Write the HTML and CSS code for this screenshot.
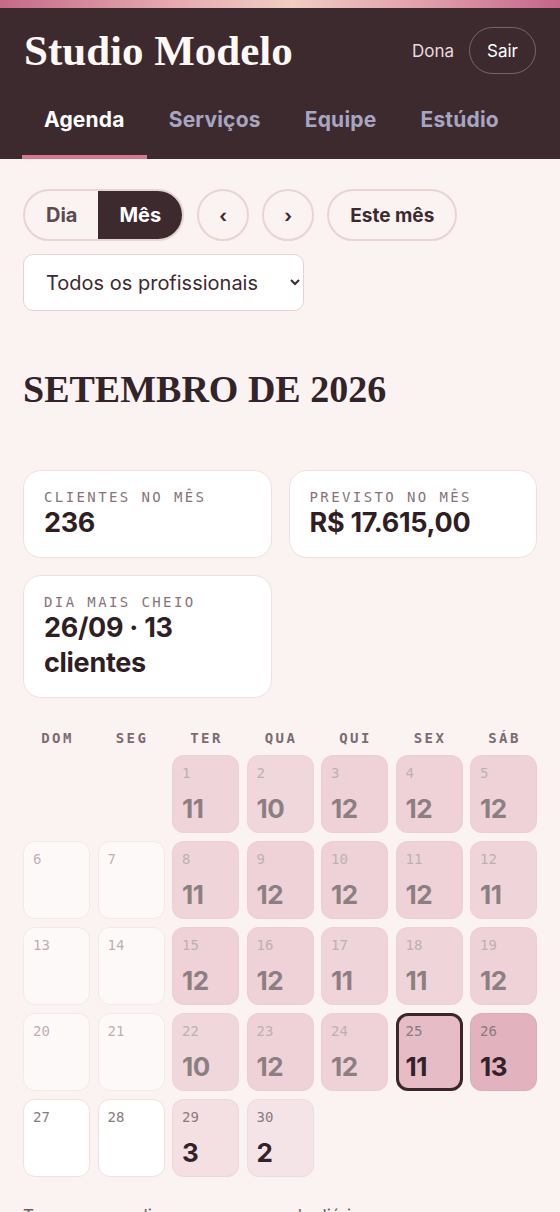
FILE: index.html
```html
<!DOCTYPE html>
<html lang="pt-BR">
<head>
  <meta charset="UTF-8">
  <meta name="viewport" content="width=device-width, initial-scale=1.0">
  <title>Studio Modelo - Agenda</title>
  <link rel="stylesheet" href="styles.css">
</head>
<body>
  <div class="topbar"></div>
  <header class="header">
    <div class="header-top">
      <h1 class="brand">Studio Modelo</h1>
      <div class="user">
        <span class="user-name">Dona</span>
        <button class="logout">Sair</button>
      </div>
    </div>
    <nav class="tabs">
      <a class="tab active" href="#">Agenda</a>
      <a class="tab" href="#">Serviços</a>
      <a class="tab" href="#">Equipe</a>
      <a class="tab" href="#">Estúdio</a>
    </nav>
  </header>

  <main class="main">
    <!-- View controls -->
    <div class="toolbar">
      <div class="segmented">
        <button class="seg">Dia</button>
        <button class="seg active">Mês</button>
      </div>
      <button class="round-btn">‹</button>
      <button class="round-btn">›</button>
      <button class="pill-btn">Este mês</button>
    </div>
    <div class="filter">
      <select class="pro-select">
        <option>Todos os profissionais</option>
        <option>Ana</option>
        <option>Bruna</option>
      </select>
    </div>

    <h2 class="month-title">SETEMBRO DE 2026</h2>

    <!-- Month stats -->
    <div class="stats">
      <div class="stat-card">
        <div class="stat-label">CLIENTES NO MÊS</div>
        <div class="stat-value">236</div>
      </div>
      <div class="stat-card">
        <div class="stat-label">PREVISTO NO MÊS</div>
        <div class="stat-value">R$ 17.615,00</div>
      </div>
      <div class="stat-card">
        <div class="stat-label">DIA MAIS CHEIO</div>
        <div class="stat-value">26/09 · 13 clientes</div>
      </div>
    </div>

    <!-- Calendar -->
    <div class="weekdays">
      <span>DOM</span><span>SEG</span><span>TER</span><span>QUA</span><span>QUI</span><span>SEX</span><span>SÁB</span>
    </div>
    <div class="month-grid" id="month-grid"></div>

    <p class="hint">Toque em um dia para ver a agenda diária.</p>
  </main>

  <script>
    // clients per day (0 = closed)
    const counts = [11, 10, 12, 12, 12, 0, 0, 11, 12, 12, 12, 11, 0, 0, 12, 12, 11, 11, 12, 0, 0,
                    10, 12, 12, 11, 13, 0, 0, 3, 2];
    const today = 25;
    const firstWeekday = 2; // 1/9/2026 is a tuesday
    const max = Math.max(...counts);
    const grid = document.getElementById('month-grid');

    counts.forEach((count, i) => {
      const day = i + 1;
      const cell = document.createElement('div');
      cell.className = 'day';
      if (day === 1) cell.style.gridColumnStart = firstWeekday + 1;
      if (day < today) cell.classList.add('past');
      if (day === today) cell.classList.add('today');

      const num = document.createElement('span');
      num.className = 'day-num';
      num.textContent = day;
      cell.appendChild(num);

      if (count > 0) {
        cell.classList.add('busy');
        cell.style.setProperty('--heat', (0.15 + 0.85 * count / max).toFixed(2));
        const total = document.createElement('span');
        total.className = 'day-count';
        total.textContent = count;
        cell.appendChild(total);
      }
      grid.appendChild(cell);
    });
  </script>
</body>
</html>
```

FILE: styles.css
```css
body {
  margin: 0;
  background: #fbf3f1;
  font-family: Inter, "Noto Sans", sans-serif;
  color: #33232a;
}
button {
  font-family: inherit;
  cursor: pointer;
}
.topbar {
  height: 8px;
  background: linear-gradient(90deg, #c46a88, #e6a8b0 30%, #f1cdc2 52%, #e2a0ad 75%, #c4668a);
}
.header {
  background: #3d2a2f;
  padding: 0 24px;
}
.header-top {
  display: flex;
  align-items: center;
  justify-content: space-between;
  padding-top: 19px;
}
.brand {
  margin: 0;
  font-family: "Liberation Serif", serif;
  font-weight: 700;
  font-size: 43px;
  line-height: 47px;
  color: #fff8f5;
}
.user {
  display: flex;
  align-items: center;
  gap: 15px;
}
.user-name {
  color: #e9dadd;
  font-size: 17px;
}
.logout {
  height: 47px;
  padding: 0 17px;
  border: 1.5px solid rgba(255, 255, 255, 0.28);
  border-radius: 24px;
  background: transparent;
  color: #fff;
  font-size: 17px;
}
.tabs {
  display: flex;
  margin: 7px 0 0 -2px;
}
.tab {
  padding: 27px 22px 23px;
  line-height: 24px;
  font-size: 21px;
  font-weight: 700;
  letter-spacing: 0.2px;
  color: #a7a6c1;
  text-decoration: none;
  border-bottom: 4px solid transparent;
}
.tab.active {
  color: #fff;
  border-bottom-color: #d8768f;
}

.main {
  padding: 30px 23px 0;
}
.toolbar {
  display: flex;
  align-items: center;
  gap: 13px;
}
.segmented {
  display: flex;
  border: 2px solid #e8d5d2;
  border-radius: 26px;
  overflow: hidden;
}
.seg {
  height: 48px;
  padding: 0 21px;
  border: none;
  background: transparent;
  font-size: 20px;
  font-weight: 700;
  color: #5b4a50;
}
.seg.active {
  background: #3d2a2f;
  color: #fff;
}
.round-btn {
  width: 52px;
  height: 52px;
  border: 2px solid #e8d5d2;
  border-radius: 50%;
  background: transparent;
  font-size: 18px;
  font-weight: 700;
  color: #3d2a2f;
}
.pill-btn {
  height: 52px;
  padding: 0 21px;
  border: 2px solid #e8d5d2;
  border-radius: 26px;
  background: transparent;
  font-size: 19px;
  font-weight: 700;
  color: #3d2a2f;
}
.filter {
  margin-top: 13px;
}
.pro-select {
  width: 281px;
  height: 57px;
  padding: 0 10px 0 18px;
  border: 1px solid #e6d3d0;
  border-radius: 10px;
  background: #fff;
  font-family: inherit;
  font-size: 20px;
  color: #3d2a2f;
}

.month-title {
  margin: 55px 0 0;
  font-family: "Liberation Serif", serif;
  font-weight: 700;
  font-size: 38px;
  line-height: 46px;
  color: #33232a;
}

.stats {
  display: grid;
  grid-template-columns: 1fr 1fr;
  gap: 17px;
  margin-top: 58px;
}
.stat-card {
  padding: 18px 20px 17px;
  border: 1px solid #efe0de;
  border-radius: 18px;
  background: #fff;
}
.stat-label {
  font-family: "DejaVu Sans Mono", monospace;
  font-size: 14px;
  line-height: 16px;
  letter-spacing: 2.4px;
  color: #877479;
}
.stat-value {
  font-size: 27px;
  font-weight: 700;
  line-height: 35px;
  letter-spacing: -0.3px;
  color: #2f1f25;
}

.weekdays {
  display: grid;
  grid-template-columns: repeat(7, 1fr);
  gap: 7.5px;
  margin-top: 30px;
  text-align: center;
  font-family: "DejaVu Sans Mono", monospace;
  font-weight: 700;
  font-size: 14px;
  line-height: 20px;
  letter-spacing: 2.4px;
  color: #7c6b71;
}
.weekdays span {
  padding-left: 2px;
}
.month-grid {
  display: grid;
  grid-template-columns: repeat(7, 1fr);
  grid-auto-rows: 78px;
  gap: 8px 7.5px;
  margin-top: 7px;
}
.day {
  display: flex;
  flex-direction: column;
  justify-content: space-between;
  padding: 9px 9px 8px;
  border: 1px solid #efe1df;
  border-radius: 12px;
  background: #fff;
  box-sizing: border-box;
}
.day.busy {
  border-color: rgba(120, 60, 80, 0.05);
  background: color-mix(in srgb, #e2b3bf calc(var(--heat) * 100%), #fdf7f7);
}
.day.past {
  opacity: 0.55;
}
.day.today {
  border: 3px solid #3a262c;
  padding: 7px 7px 6px;
}
.day-num {
  font-family: "DejaVu Sans Mono", monospace;
  font-size: 14px;
  line-height: 16px;
  color: #8a7a7f;
}
.day-count {
  font-size: 26px;
  font-weight: 700;
  line-height: 30px;
  letter-spacing: -0.5px;
  color: #33222a;
}

.hint {
  margin: 28px 0 0;
  font-size: 17px;
  line-height: 22px;
  color: #6d5c62;
}
```
